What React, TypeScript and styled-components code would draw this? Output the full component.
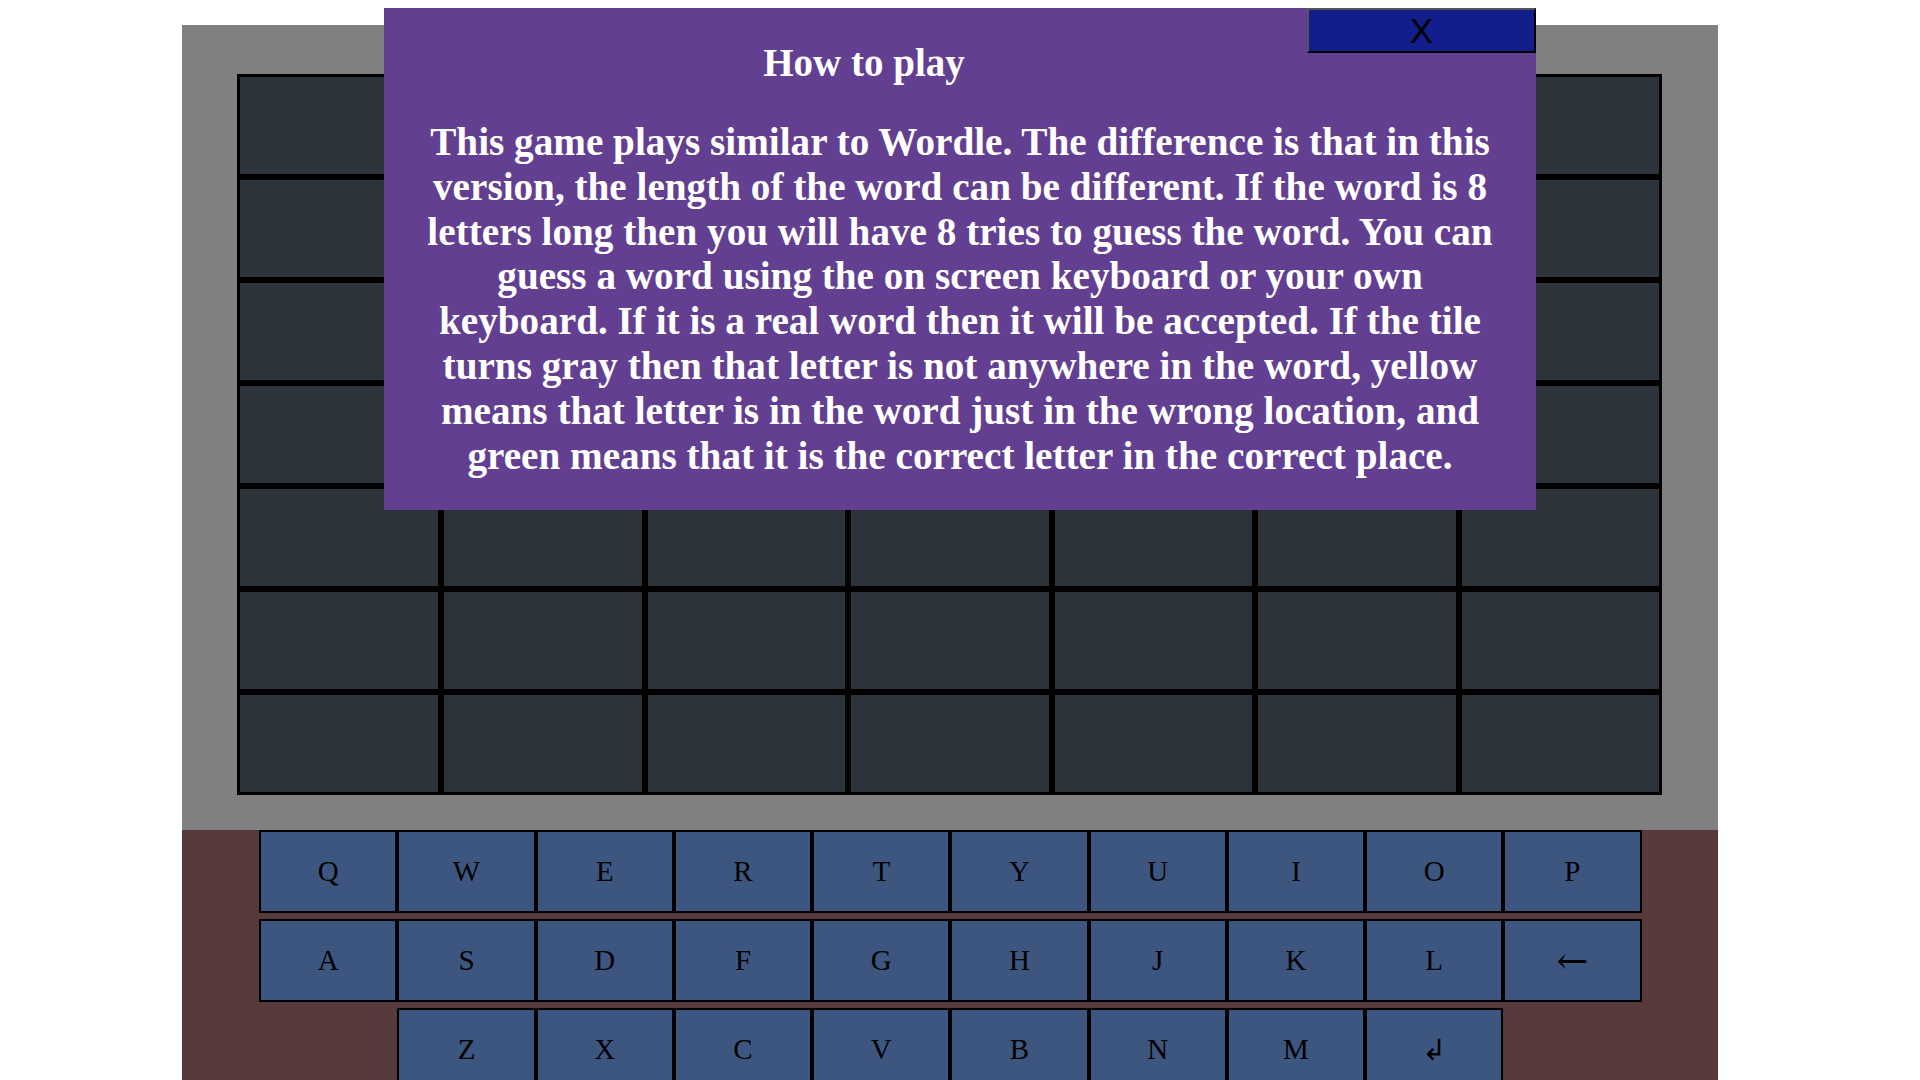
import React, { useLayoutEffect } from "react";
import styled, { createGlobalStyle } from "styled-components";

const GlobalStyle = createGlobalStyle`
  html, body {
    margin: 0;
    padding: 0;
    background: #ffffff;
    font-family: "Liberation Serif", "Times New Roman", serif;
    scroll-behavior: auto;
  }
  html {
    overflow-y: scroll;
  }
  * { box-sizing: border-box; }
`;

const Page = styled.div`
  display: flex;
  flex-direction: column;
  padding-top: 293px;
  padding-bottom: 22px;
`;

const Game = styled.main`
  width: 80vw;
  margin-left: 9.5vw;
  display: flex;
  flex-direction: column;
`;

const BoardArea = styled.section`
  background: #808080;
  padding: 49px 56px 35px 55px;
`;

const Board = styled.div<{ $cols: number }>`
  display: grid;
  grid-template-columns: repeat(${(p) => p.$cols}, 1fr);
`;

const Cell = styled.div`
  height: 103px;
  background: #2d333b;
  border: 3px solid #000;
`;

const KeyboardArea = styled.section`
  background: #573b3c;
  display: flex;
  flex-direction: column;
  align-items: center;
  gap: 6px;
  padding-bottom: 22px;
`;

const KeyRow = styled.div`
  width: 90%;
  display: flex;
  justify-content: center;
`;

const Key = styled.button<{ $symbol?: boolean }>`
  flex: 0 0 10%;
  height: 83px;
  margin: 0;
  padding: 0;
  background: #3d5680;
  border: 2px solid #000;
  border-radius: 0;
  color: #000;
  font-family: ${(p) =>
    p.$symbol
      ? `"DejaVu Serif", "Liberation Serif", serif`
      : `"Liberation Serif", "Times New Roman", serif`};
  font-size: ${(p) => (p.$symbol ? "38px" : "29px")};
  font-weight: normal;
  display: flex;
  align-items: center;
  justify-content: center;
  cursor: pointer;
`;

const Modal = styled.div`
  position: fixed;
  top: 8px;
  left: 20vw;
  width: 60vw;
  background: #633f91;
  color: #ffffff;
  font-family: "Liberation Serif", "Times New Roman", serif;
  font-weight: bold;
  display: flow-root;
`;

const CloseButton = styled.button`
  float: right;
  width: 229px;
  height: 45px;
  margin: 0;
  padding: 0;
  background: #121e8b;
  border-width: 2px;
  border-style: solid;
  border-color: #555555 #000000 #000000 #555555;
  color: #000;
  font-family: "Liberation Sans", Arial, sans-serif;
  font-size: 35px;
  font-weight: normal;
  line-height: 1;
  cursor: pointer;
`;

const ModalTitle = styled.h2`
  margin: 32px 0 0 37px;
  font-size: 39px;
  line-height: normal;
  text-align: center;
`;

const ModalText = styled.p`
  clear: both;
  margin: 35px 37px 32px;
  font-size: 39.2px;
  line-height: 44.8px;
  text-align: center;
`;

const ROWS = 7;
const COLS = 7;

const keyRows: string[][] = [
  ["Q", "W", "E", "R", "T", "Y", "U", "I", "O", "P"],
  ["A", "S", "D", "F", "G", "H", "J", "K", "L", "\u2190"],
  ["Z", "X", "C", "V", "B", "N", "M", "\u21B2"],
];

const isSymbol = (k: string) => k === "\u2190";

export default function App() {
  useLayoutEffect(() => {
    window.scrollTo(0, 268);
  }, []);

  return (
    <>
      <GlobalStyle />
      <Page>
        <Game>
          <BoardArea>
            <Board $cols={COLS}>
              {Array.from({ length: ROWS * COLS }).map((_, i) => (
                <Cell key={i} />
              ))}
            </Board>
          </BoardArea>
          <KeyboardArea>
            {keyRows.map((row, r) => (
              <KeyRow key={r}>
                {row.map((k) => (
                  <Key key={k} $symbol={isSymbol(k)}>
                    {k}
                  </Key>
                ))}
              </KeyRow>
            ))}
          </KeyboardArea>
        </Game>
      </Page>
      <Modal>
        <CloseButton>X</CloseButton>
        <ModalTitle>How to play</ModalTitle>
        <ModalText>
          This game plays similar to Wordle. The difference is that in this version, the length of the
          word can be different. If the word is 8 letters long then you will have 8 tries to guess the
          word. You can guess a word using the on screen keyboard or your own keyboard. If it is a real
          word then it will be accepted. If the tile turns gray then that letter is not anywhere in the
          word, yellow means that letter is in the word just in the wrong location, and green means that
          it is the correct letter in the correct place.
        </ModalText>
      </Modal>
    </>
  );
}
